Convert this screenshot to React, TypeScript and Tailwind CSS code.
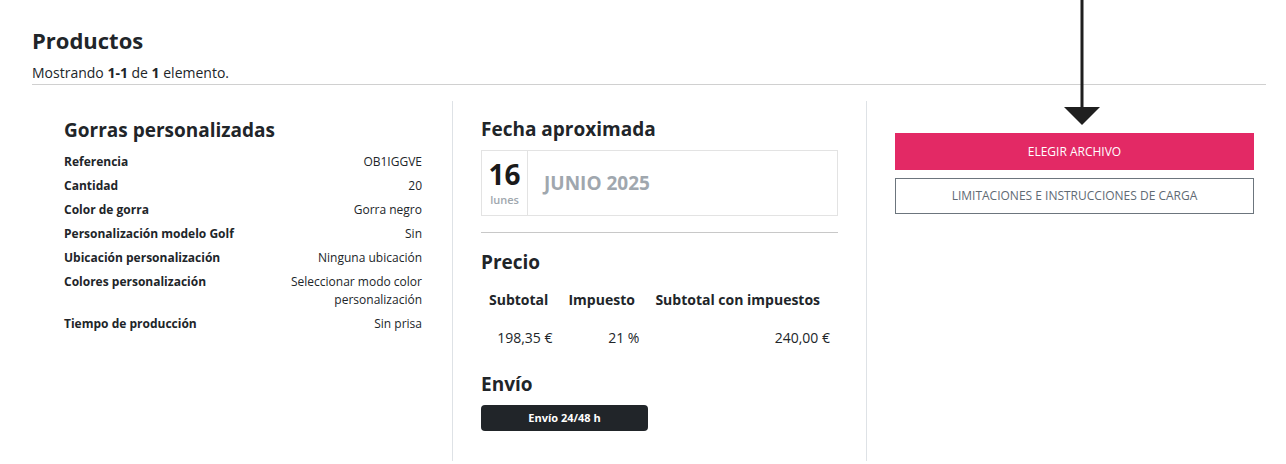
import React from "react";

type Row = { label: string; value: React.ReactNode };

const rows: Row[] = [
  { label: "Referencia", value: "OB1IGGVE" },
  { label: "Cantidad", value: "20" },
  { label: "Color de gorra", value: "Gorra negro" },
  { label: "Personalización modelo Golf", value: "Sin" },
  { label: "Ubicación personalización", value: "Ninguna ubicación" },
  {
    label: "Colores personalización",
    value: (
      <>
        Seleccionar modo color
        <br />
        personalización
      </>
    ),
  },
  { label: "Tiempo de producción", value: "Sin prisa" },
];

const heading = "font-['Open_Sans',sans-serif] font-bold text-[#212529]";

function DownArrow() {
  // the big pointer that hangs over the upload button
  return (
    <svg
      className="absolute left-[1063px] top-0"
      width="38"
      height="126"
      viewBox="0 0 38 126"
    >
      <rect x="17.5" y="0" width="3" height="110" fill="#1f1f1f" />
      <polygon points="1,107 37,107 19,125" fill="#1f1f1f" />
    </svg>
  );
}

export default function App() {
  return (
    <div className="relative h-[464px] w-[1286px] overflow-hidden bg-white font-['Open_Sans',sans-serif] text-[#212529]">
      <DownArrow />
      <div className="pl-8 pr-5 pt-[25px]">
        <h1 className={`${heading} text-[22px] leading-[30px]`}>Productos</h1>
        <p className="mt-[8px] text-[14px] leading-[20px]">
          Mostrando <b>1-1</b> de <b>1</b> elemento.
        </p>
        <div className="mt-[1px] border-t border-[#d0d0d0]" />
      </div>

      <div className="ml-8 mt-4 flex h-[360px] w-[1234px]">
        {/* product details */}
        <div className="w-[420px] pl-8 pr-[30px] pt-[16px]">
          <h2 className={`${heading} text-[19px] leading-[26px]`}>Gorras personalizadas</h2>
          <div className="mt-[10px] flex flex-col gap-[6px] text-[12px] leading-[18px]">
            {rows.map((r) => (
              <div key={r.label} className="flex justify-between gap-4">
                <span className="font-bold">{r.label}</span>
                <span className="text-right">{r.value}</span>
              </div>
            ))}
          </div>
        </div>

        {/* date, price and shipping */}
        <div className="w-[414px] border-l border-[#dee2e6] px-7 pt-[15px]">
          <h2 className={`${heading} text-[19px] leading-[26px]`}>Fecha aproximada</h2>
          <div className="mt-[8px] flex h-[66px] border border-[#e3e3e3]">
            <div className="flex w-[46px] flex-col items-center border-r border-[#e3e3e3] pt-[8px]">
              <span className="text-[28px] font-bold leading-[30px] text-[#1a1a1a]">16</span>
              <span className="mt-[4px] text-[11px] font-semibold leading-[14px] text-[#a0a7ae]">lunes</span>
            </div>
            <div className="flex items-center pl-4 text-[19px] font-bold text-[#a0a7ae]">JUNIO 2025</div>
          </div>
          <div className="mt-4 border-t border-[#c8c8c8]" />

          <h2 className={`${heading} mt-[16px] text-[19px] leading-[26px]`}>Precio</h2>
          <table className="mt-[14px] w-full text-[14px]">
            <thead>
              <tr className="font-bold">
                <th className="px-2 pb-[9px] text-left">Subtotal</th>
                <th className="px-2 pb-[9px] text-left">Impuesto</th>
                <th className="px-2 pb-[9px] text-left">Subtotal con impuestos</th>
              </tr>
            </thead>
            <tbody>
              <tr>
                <td className="px-2 py-[8px] text-right">198,35 €</td>
                <td className="px-2 py-[8px] text-right">21 %</td>
                <td className="px-2 py-[8px] text-right">240,00 €</td>
              </tr>
            </tbody>
          </table>

          <h2 className={`${heading} mt-[15px] text-[19px] leading-[26px]`}>Envío</h2>
          <div className="mt-[8px] flex h-[26px] w-[167px] items-center justify-center rounded-[4px] bg-[#212529] text-[11px] font-bold text-white">
            Envío 24/48 h
          </div>
        </div>

        {/* upload actions */}
        <div className="flex-1 border-l border-[#dee2e6] pl-[28px] pr-[12px] pt-[32px]">
          <button className="flex h-[37px] w-full items-center justify-center bg-[#e32965] text-[12px] text-white">
            ELEGIR ARCHIVO
          </button>
          <button className="mt-[8px] flex h-[36px] w-full items-center justify-center border border-[#6c757d] text-[12px] text-[#5f6a74]">
            LIMITACIONES E INSTRUCCIONES DE CARGA
          </button>
        </div>
      </div>
    </div>
  );
}
